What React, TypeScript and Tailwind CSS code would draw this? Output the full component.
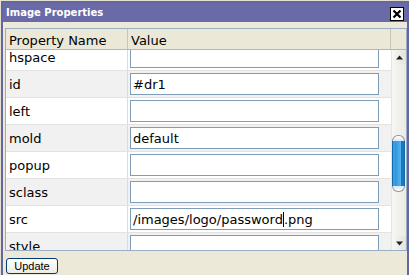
import React from 'react';

const rows: { name: string; value: string; caret?: number }[] = [
  { name: 'hspace', value: '' },
  { name: 'id', value: '#dr1' },
  { name: 'left', value: '' },
  { name: 'mold', value: 'default' },
  { name: 'popup', value: '' },
  { name: 'sclass', value: '' },
  { name: 'src', value: '/images/logo/password.png', caret: 21 },
  { name: 'style', value: '' },
];

const font = { fontFamily: '"DejaVu Sans", Verdana, sans-serif' };

function Arrow({ up }: { up?: boolean }) {
  return (
    <div className="h-[14px] flex items-center justify-center bg-gradient-to-r from-[#f7f7f4] to-[#e4e3dc]">
      <svg width="7" height="5" viewBox="0 0 7 5">
        {up ? <path d="M3.5 0.5 L7 4.5 L0 4.5 Z" fill="#222" /> : <path d="M0 0.5 L7 0.5 L3.5 4.5 Z" fill="#222" />}
      </svg>
    </div>
  );
}

export default function App() {
  return (
    <div className="w-[409px] h-[275px] bg-[#e4e1d1] pt-px pl-px" style={font}>
      <div className="w-[408px] h-[274px] border-2 border-[#6565a2] bg-[#ece9d8] flex flex-col">
        {/* title bar */}
        <div className="h-[19px] shrink-0 bg-[#6a6aa8] flex items-center justify-between pl-[3px] pr-[3px]">
          <span className="text-white font-bold text-[10px] leading-[12px] pt-px">Image Properties</span>
          <div className="w-[14px] h-[14px] bg-white border border-black flex items-center justify-center mt-[2px]">
            <svg width="10" height="10" viewBox="0 0 10 10">
              <path d="M1.5 1.5 L8.5 8.5 M8.5 1.5 L1.5 8.5" stroke="#000" strokeWidth="2.2" />
            </svg>
          </div>
        </div>

        {/* grid */}
        <div className="mt-[6px] ml-[2px] border border-[#9aadc6] bg-white flex flex-col">
          <div className="h-[21px] flex bg-[#ebe8d7] border-b border-[#b9b6a4] text-[13px] leading-[15px] text-black">
            <div className="w-[122px] border-r border-[#c9c6b5] pl-[3px] pt-[4px]">Property Name</div>
            <div className="w-[263px] border-r border-[#c9c6b5] pl-[3px] pt-[4px]">Value</div>
            <div className="flex-1" />
          </div>
          <div className="h-[200px] flex overflow-hidden">
            <div className="w-[385px] overflow-hidden">
              <div className="-mt-[6px]">
                {rows.map((r, i) => (
                  <div
                    key={r.name}
                    className={`h-[27px] flex border-b border-[#e2e2e2] text-[13px] leading-[15px] text-black ${i % 2 === 1 ? 'bg-[#f1f1f1]' : 'bg-white'}`}
                  >
                    <div className="w-[122px] border-r border-[#dcdcdc] pl-[3px] flex items-center">{r.name}</div>
                    <div className="w-[263px] pl-[2px] pt-[2px]">
                      <div className="w-[249px] h-[22px] border border-[#7f9db9] bg-white pl-[2px] flex items-center whitespace-nowrap">
                        {r.caret !== undefined ? (
                          <>
                            {r.value.slice(0, r.caret)}
                            <span className="inline-block w-px h-[15px] bg-black" />
                            {r.value.slice(r.caret)}
                          </>
                        ) : (
                          r.value
                        )}
                      </div>
                    </div>
                  </div>
                ))}
              </div>
            </div>
            {/* scrollbar */}
            <div className="flex-1 flex flex-col bg-gradient-to-r from-[#f6f6f3] to-[#eceae4] border-l border-[#e6e6e0]">
              <Arrow up />
              <div className="flex-1 relative">
                <div className="absolute left-0 right-px top-[71px] h-[57px] flex flex-col">
                  <div className="h-[6px] rounded-t-[6px] border border-b-0 border-[#8c9aa8] bg-gradient-to-b from-[#ffffff] to-[#dfe6ee]" />
                  <div className="flex-1 flex bg-[#1f86d0] border-x border-[#176aa8]">
                    <div className="w-[2px] bg-[#3aa0e4]" />
                    <div className="flex-1 bg-gradient-to-r from-[#2f94dc] to-[#55b3ef]" />
                    <div className="w-[3px] bg-[#1b78bf]" />
                  </div>
                  <div className="h-[6px] rounded-b-[6px] border border-t-0 border-[#8c9aa8] bg-gradient-to-t from-[#ffffff] to-[#dfe6ee]" />
                </div>
              </div>
              <Arrow />
            </div>
          </div>
        </div>

        {/* footer */}
        <div className="flex-1 bg-[#ece9d8] pl-[3px] pt-[2px]">
          <button
            className="w-[52px] h-[16px] rounded-[3px] border border-[#003c74] bg-gradient-to-b from-white to-[#ecebe6] text-[11px] leading-[12px] text-black"
            style={{ fontFamily: '"Liberation Sans", Arial, sans-serif' }}
          >
            Update
          </button>
        </div>
      </div>
    </div>
  );
}
